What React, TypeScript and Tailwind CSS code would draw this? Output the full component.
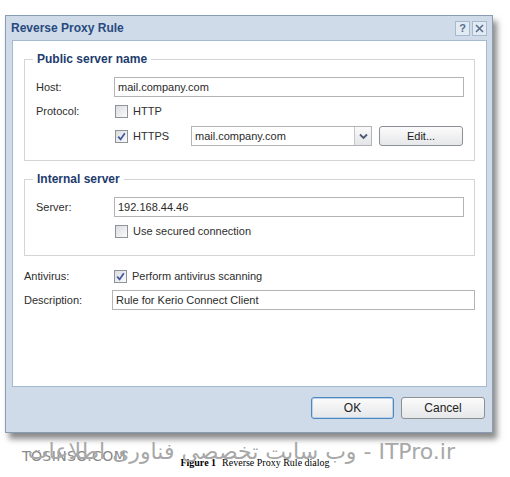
import { ReactNode } from "react";

function Check({ checked }: { checked?: boolean }) {
    return (
        <span className="w-[13px] h-[13px] shrink-0 border border-[#8f9296] bg-linear-to-br from-[#dadcdf] to-[#fafbfc] flex items-center justify-center">
            {checked && (
                <svg width="9" height="9" viewBox="0 0 9 9">
                    <path d="M1.2 4.6 L3.6 7.4 L7.8 1.2" fill="none" stroke="#3f55a0" strokeWidth="1.7" />
                </svg>
            )}
        </span>
    );
}

function Field({ value, className }: { value: string; className?: string }) {
    return (
        <div className={"h-5 border border-[#b2b4b8] bg-white flex items-center pl-[3px] text-[#2a2a2a] " + (className ?? "")}>
            {value}
        </div>
    );
}

function Group({ title, children }: { title: string; children: ReactNode }) {
    return (
        <fieldset className="border border-[#d2d4d8] pl-[11px] pr-[10px] pt-[11px] pb-[14px]">
            <legend className="-ml-[3px] px-[4px] h-[14px] leading-[14px] text-[12px] font-bold text-[#1e3c6e]">{title}</legend>
            {children}
        </fieldset>
    );
}

function Btn({ label, primary, className }: { label: string; primary?: boolean; className?: string }) {
    return (
        <div
            className={
                "flex items-center justify-center rounded-[3px] border bg-linear-to-b from-[#fbfbfb] to-[#e6e7e9] text-[#222] " +
                (primary ? "border-[#4f87bd] shadow-[inset_0_0_0_1px_#b9d3ec] " : "border-[#8c8f94] ") +
                (className ?? "")
            }
        >
            {label}
        </div>
    );
}

function App() {
    return (
        <div className="relative w-[510px] h-[477px] overflow-hidden bg-white font-['Liberation_Sans',Arial,sans-serif] text-[11px] text-[#2e2e2e]">
            <div className="pt-[15px] pl-[5px]">
                <div className="w-[488px] h-[418px] flex flex-col border border-[#8a9bb4] bg-[#cfdbe9] shadow-[4px_6px_6px_rgba(40,40,40,0.55)]">
                    <div className="h-[24px] flex items-center justify-between pl-[5px] pr-[5px]">
                        <span className="text-[12px] font-bold text-[#284a80]">Reverse Proxy Rule</span>
                        <div className="flex gap-[2px]">
                            <span className="w-[15px] h-[15px] border border-[#a9b9cd] bg-[#e2eaf3] flex items-center justify-center text-[11px] font-bold leading-none text-[#5a6e8e]">?</span>
                            <span className="w-[15px] h-[15px] border border-[#a9b9cd] bg-[#e2eaf3] flex items-center justify-center">
                                <svg width="9" height="9" viewBox="0 0 9 9">
                                    <path d="M1 1 L8 8 M8 1 L1 8" stroke="#5a6e8e" strokeWidth="1.6" />
                                </svg>
                            </span>
                        </div>
                    </div>

                    <div className="ml-[6px] mr-[5px] h-[347px] border border-[#a7b9d0] bg-white px-[11px] pt-[11px]">
                        <Group title="Public server name">
                            <div className="h-5 flex items-center">
                                <span className="w-[78px]">Host:</span>
                                <Field value="mail.company.com" className="flex-1" />
                            </div>
                            <div className="h-5 mt-[4px] flex items-center">
                                <span className="w-[79px]">Protocol:</span>
                                <Check />
                                <span className="ml-[5px]">HTTP</span>
                            </div>
                            <div className="h-5 mt-[5px] flex items-center">
                                <span className="w-[79px]" />
                                <div className="w-[76px] flex items-center">
                                    <Check checked />
                                    <span className="ml-[5px]">HTTPS</span>
                                </div>
                                <div className="w-[181px] h-5 border border-[#b2b4b8] flex">
                                    <span className="flex-1 flex items-center pl-[3px] text-[#2a2a2a]">mail.company.com</span>
                                    <span className="w-[17px] border-l border-[#c4c6ca] bg-linear-to-b from-[#fafafa] to-[#e3e5e8] flex items-center justify-center">
                                        <svg width="9" height="7" viewBox="0 0 9 7">
                                            <path d="M1 1.5 L4.5 5 L8 1.5" fill="none" stroke="#4a5a72" strokeWidth="1.8" />
                                        </svg>
                                    </span>
                                </div>
                                <Btn label="Edit..." className="ml-[7px] w-[84px] h-5" />
                            </div>
                        </Group>

                        <div className="mt-[11px]">
                            <Group title="Internal server">
                                <div className="h-5 flex items-center">
                                    <span className="w-[78px]">Server:</span>
                                    <Field value="192.168.44.46" className="flex-1" />
                                </div>
                                <div className="h-5 mt-[4px] flex items-center">
                                    <span className="w-[79px]" />
                                    <Check />
                                    <span className="ml-[5px]">Use secured connection</span>
                                </div>
                            </Group>
                        </div>

                        <div className="h-5 mt-[10px] flex items-center">
                            <span className="w-[90px]">Antivirus:</span>
                            <Check checked />
                            <span className="ml-[5px]">Perform antivirus scanning</span>
                        </div>
                        <div className="h-5 mt-[4px] flex items-center">
                            <span className="w-[88px]">Description:</span>
                            <Field value="Rule for Kerio Connect Client" className="flex-1" />
                        </div>
                    </div>

                    <div className="flex-1 flex justify-end items-start gap-[7px] pt-[10px] pr-[7px]">
                        <Btn label="OK" primary className="w-[83px] h-[22px] text-[12px]" />
                        <Btn label="Cancel" className="w-[84px] h-[22px] text-[12px]" />
                    </div>
                </div>
            </div>

            <div className="mt-[22px] text-center font-['Liberation_Serif',serif] text-[10px] text-black">
                <span className="font-bold">Figure 1</span>
                <span className="ml-[6px]">Reverse Proxy Rule dialog</span>
            </div>

            <div className="absolute left-[22px] top-[447px] text-[14px] leading-[18px] tracking-[0.4px] text-[#8a8a8a] font-['DejaVu_Sans',sans-serif]">
                TOSINSO.COM
            </div>
            <div className="absolute right-[55px] top-[437px] text-[22px] leading-[30px] text-[#a8a8a8] font-['DejaVu_Sans',sans-serif] whitespace-nowrap">
                <span dir="rtl">وب سایت تخصصی فناوری اطلاعات</span>
                <span> - ITPro.ir</span>
            </div>
        </div>
    );
}

export default App
